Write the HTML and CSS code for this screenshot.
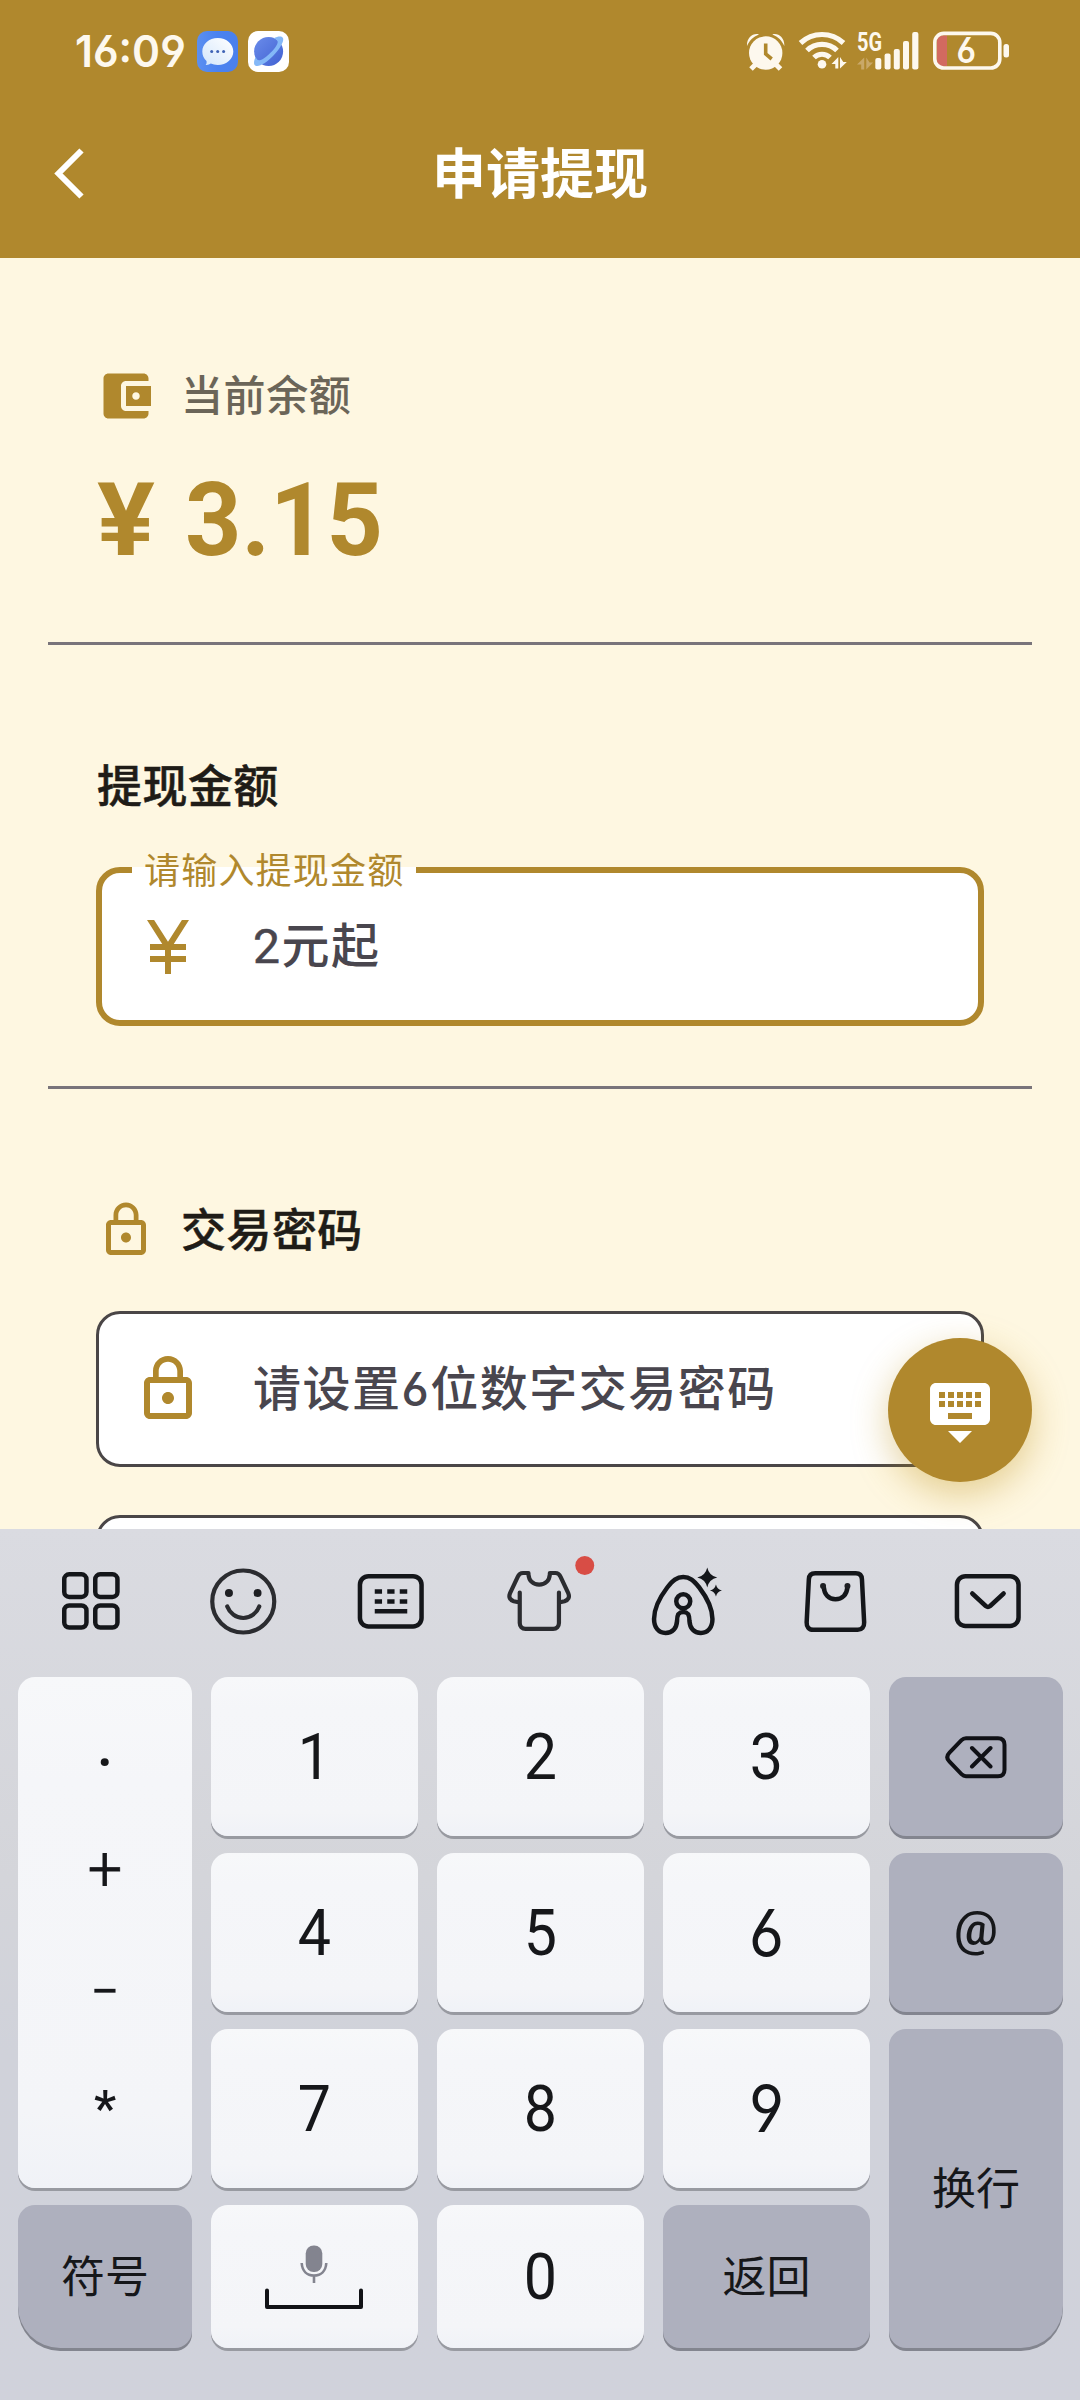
FILE: index.html
```html
<!DOCTYPE html>
<html lang="zh-CN">
<head>
<meta charset="utf-8">
<title>申请提现</title>
<link rel="stylesheet" href="styles.css">
</head>
<body>
<div class="screen">
  <header class="header">
    <div class="status">
      <div class="status-left">
        <span class="clock">16:09</span>
        <svg class="app-icon" viewBox="0 0 41 41">
          <defs>
            <linearGradient id="msg" x1="0" y1="0" x2="1" y2="0"><stop offset="0" stop-color="#5b8ff0"/><stop offset=".5" stop-color="#4a82f0"/><stop offset="1" stop-color="#4a80ec"/></linearGradient>
            <linearGradient id="bub" x1="1" y1="0" x2="0" y2="1"><stop offset="0" stop-color="#ffffff"/><stop offset="1" stop-color="#d3e6fb"/></linearGradient>
          </defs>
          <rect width="41" height="41" rx="10" fill="url(#msg)"/>
          <path d="M20.800 7c8.800 0 15.500 6 15.500 13.500S29.600 34 20.800 34c-2.800 0-5-.5-7-1.400-1.400 1-3.200 1.700-5.200 1.400 1-1.200 1.200-2.600.9-4.100C6.800 27.500 5.300 24.300 5.300 20.500 5.300 13 12 7 20.800 7z" fill="url(#bub)"/>
          <circle cx="14.700" cy="20.500" r="1.500" fill="#3f63b5"/><circle cx="20.700" cy="20.500" r="1.500" fill="#3f63b5"/><circle cx="26.600" cy="20.500" r="1.500" fill="#3f63b5"/>
        </svg>
        <svg class="app-icon" viewBox="0 0 41 41">
          <defs><linearGradient id="pl" x1="0" y1="0" x2="1" y2="1"><stop offset="0" stop-color="#6a8cea"/><stop offset="1" stop-color="#4161d2"/></linearGradient></defs>
          <rect width="41" height="41" rx="10" fill="#fff"/>
          <circle cx="20.600" cy="20.500" r="14.500" fill="url(#pl)"/>
          <path d="M25.500 7.500C30 5.200 33.600 5 34.800 6.800c2 3.200-3 11.200-9.800 18.200-6.800 7-14.500 11.500-17.800 9.400-1.800-1.200-1.400-4.800.6-8.900.3 2.600 1.600 4 3.800 3.800 3-.4 7-3.500 10.800-7.500 4-4 7.400-8.300 7.300-11 0-1.700-2-2.600-4.200-3.300z" fill="#84b8f7"/>
        </svg>
      </div>
      <svg class="status-right" viewBox="744 28 268 46">
        <g fill="#fdf8ee">
          <circle cx="765.700" cy="53" r="16.700"/>
          <path d="M747 46c-.6-8 6-13.500 12-11.600C753 36.500 749.500 40.500 747 46zM784.300 46c.6-8-6-13.500-12-11.600 6 2.100 9.500 6.100 12 11.600z"/>
          <path d="M756 64l-5 5M775.500 64l5 5" stroke="#fdf8ee" stroke-width="5"/>
        </g>
        <path d="M765.700 43.500V54l6 5" fill="none" stroke="#b0882d" stroke-width="3.600"/>
        <g fill="none" stroke="#fdf8ee" stroke-width="5.200">
          <path d="M800.500 43a31.500 31.500 0 0 1 43 0"/>
          <path d="M807 50.500a21.500 21.500 0 0 1 30 0"/>
          <path d="M814 57.500a11.500 11.500 0 0 1 16 0"/>
        </g>
        <circle cx="822" cy="64.200" r="4.300" fill="#fdf8ee"/>
        <path d="M831.500 64l6.800-7v11.500h-3V64zM840 57v11.500l6.800-6.500h-3.500z" fill="#fdf8ee"/>
        <text x="857" y="50.800" class="net" textLength="25" lengthAdjust="spacingAndGlyphs">5G</text>
        <path d="M857 64.500l7.200-7V69.500h-3V64.500zM866.300 57.500v12l6.800-7h-3.500z" fill="#c9a868"/>
        <g fill="#fdf8ee">
          <rect x="875.300" y="58" width="6" height="11.500" rx="2"/>
          <rect x="884.600" y="53.500" width="6" height="16" rx="2"/>
          <rect x="893.800" y="49" width="6" height="20.500" rx="2"/>
          <rect x="903" y="41" width="6" height="28.500" rx="2"/>
          <rect x="912.200" y="32" width="6.200" height="37.500" rx="2"/>
        </g>
        <path d="M947 35.500v30.500h-4c-4 0-6-2-6-6V41.500c0-4 2-6 6-6z" fill="#d26a60"/>
        <rect x="934.800" y="33.400" width="65" height="34.600" rx="9" fill="none" stroke="#fdf8ee" stroke-width="3.600"/>
        <rect x="1003.500" y="44" width="5.500" height="13.500" rx="2.500" fill="#fdf8ee"/>
        <text x="956.500" y="63" class="batt" textLength="19.500" lengthAdjust="spacingAndGlyphs">6</text>
      </svg>
    </div>
    <div class="appbar">
      <svg class="back" viewBox="0 0 60 60"><path d="M40.500 6.500L17.500 29.500L40.500 52.500" fill="none" stroke="#fff" stroke-width="6"/></svg>
      <h1 class="title">申请提现</h1>
      <span class="back"></span>
    </div>
  </header>

  <main class="content">
    <section class="balance">
      <div class="label-row">
        <svg class="icon-60 gold" viewBox="0 0 24 24"><path d="M21 18v1c0 1.100-.9 2-2 2H5c-1.110 0-2-.9-2-2V5c0-1.100.89-2 2-2h14c1.100 0 2 .9 2 2v1h-9c-1.110 0-2 .9-2 2v8c0 1.100.89 2 2 2h9zm-9-2h10V8H12v8zm4-2.500c-.83 0-1.500-.67-1.500-1.500s.67-1.500 1.500-1.500 1.500.67 1.500 1.500-.67 1.500-1.500 1.500z"/></svg>
        <span class="balance-label">当前余额</span>
      </div>
      <div class="amount"><span class="cur">¥</span><span class="num">3.15</span></div>
    </section>
    <hr class="rule">
    <section class="withdraw">
      <h2 class="section-title">提现金额</h2>
      <div class="field field-active">
        <span class="float-label">请输入提现金额</span>
        <svg class="icon-72 gold" viewBox="0 0 24 24"><path d="M13.920 11H18v2h-5v2h5v2h-5v4h-2v-4H6v-2h5v-2H6v-2h4.080L5 3h2.370L12 10.290 16.630 3H19l-5.080 8z"/></svg>
        <span class="hint"><span class="latin">2</span>元起</span>
      </div>
    </section>
    <hr class="rule">
    <section class="password">
      <div class="label-row">
        <svg class="icon-60 gold" viewBox="0 0 24 24"><path id="lock" d="M12 17c1.100 0 2-.9 2-2s-.9-2-2-2-2 .9-2 2 .9 2 2 2zm6-9h-1V6c0-2.760-2.240-5-5-5S7 3.240 7 6v2H6c-1.100 0-2 .9-2 2v10c0 1.100.9 2 2 2h12c1.100 0 2-.9 2-2V10c0-1.100-.9-2-2-2zM8.900 6c0-1.710 1.390-3.100 3.100-3.100s3.100 1.390 3.100 3.100v2H8.900V6zM18 20H6V10h12v10z"/></svg>
        <h2 class="section-title">交易密码</h2>
      </div>
      <div class="field">
        <svg class="icon-72 gold" viewBox="0 0 24 24"><use href="#lock"/></svg>
        <span class="hint">请设置<span class="open-digit">6</span>位数字交易密码</span>
      </div>
      <div class="field"></div>
    </section>
    <button class="fab">
      <svg class="icon-72" viewBox="0 0 24 24" fill="#fff"><path d="M20 3H4c-1.100 0-1.990.9-1.990 2L2 15c0 1.100.9 2 2 2h16c1.100 0 2-.9 2-2V5c0-1.100-.9-2-2-2zm-9 3h2v2h-2V6zm0 3h2v2h-2V9zM8 6h2v2H8V6zm0 3h2v2H8V9zm-1 2H5V9h2v2zm0-3H5V6h2v2zm9 7H8v-2h8v2zm0-4h-2V9h2v2zm0-3h-2V6h2v2zm3 3h-2V9h2v2zm0-3h-2V6h2v2zm-7 15l4-4H8l4 4z"/></svg>
    </button>
  </main>

  <div class="keyboard">
    <div class="tools">
      <svg viewBox="16.250 1529 149.500 148"><rect x="64.500" y="1574.300" width="22.200" height="22.600" rx="5"/><rect x="95.500" y="1574.300" width="22.200" height="22.600" rx="5"/><rect x="64.500" y="1605.400" width="22.200" height="22.200" rx="5"/><rect x="95.500" y="1605.400" width="22.200" height="22.200" rx="5"/></svg>
      <svg class="soft" viewBox="165.750 1529 149.500 148"><circle cx="243" cy="1601.500" r="31"/><circle class="dot" cx="228.700" cy="1593" r="4"/><circle class="dot" cx="257.300" cy="1593" r="4"/><path d="M227 1606.500c2.500 6.500 8.500 11.500 16 11.500s13.500-5 16-11.500"/></svg>
      <svg viewBox="315.250 1529 149.500 148"><rect x="360.200" y="1576.200" width="61.600" height="50.300" rx="8.500"/><path class="flat" d="M375 1591.500h7.300M387.500 1591.500h7.300M400 1591.500h7.500M375 1601.500h7.300M387.500 1601.500h7.300M400 1601.500h7.500M375 1611.300h32.500"/></svg>
      <svg class="soft" viewBox="464.750 1529 149.500 148"><path d="M519.500 1592.500V1623c0 3.500 2.300 5.800 5.800 5.800h27.600c3.500 0 5.800-2.300 5.800-5.800v-30.500M519.500 1602.500l-6-1.300c-3.800-1.200-5.300-4-3.800-7.800l8-17c1-2.400 2.600-3.400 5-3.400h5.500v1.500c.5 6 4.500 10.200 10.700 10.200s10.200-4.200 10.700-10.200V1573h5.500c2.400 0 4 1 5 3.400l8 17c1.500 3.800 0 6.600-3.800 7.800l-5.600 1.300"/><circle class="badge" cx="584.500" cy="1565.500" r="9.500"/></svg>
      <svg viewBox="614.250 1529 149.500 148"><path d="M683.500 1577c6.500 0 10.500 3.500 16 10.500 8 10.500 13.200 22 13.200 31.500 0 8.500-4.500 14-11.500 14-7 0-11-4.500-11.500-12 0-5.800-1-9-6.200-9s-6.200 3.200-6.200 9c-.5 7.500-4.500 12-11.500 12s-11.500-5.500-11.500-14c0-9.500 5.200-21 13.200-31.500 5.500-7 9.500-10.500 16-10.500z"/><circle cx="683.500" cy="1601.300" r="7"/><path class="fill" d="M707.500 1567.500q1.800 8.300 10 10-8.200 1.700-10 10-1.800-8.300-10-10 8.200-1.700 10-10zM716.200 1584.500q1.200 4.900 6 6-4.800 1.100-6 6-1.200-4.900-6-6 4.800-1.100 6-6z"/></svg>
      <svg viewBox="763.750 1529 149.500 148"><path d="M815 1573.300h40.500c4 0 6 2 6.200 6l2.200 43c.2 4.500-2.200 7.500-6.500 7.500h-44.500c-4.300 0-6.700-3-6.500-7.500l2.200-43c.2-4 2.400-6 6.400-6zM823.500 1587c.5 7.500 5 12.300 11.700 12.300s11.500-4.800 12-12.300"/><circle class="dot" cx="822.800" cy="1586" r="3"/><circle class="dot" cx="847.200" cy="1586" r="3"/></svg>
      <svg viewBox="913.250 1529 149.500 148"><rect x="957.200" y="1576.200" width="61.600" height="49.800" rx="8.500"/><path d="M972.500 1593.500l13.500 12.500q2.200 1.800 4.400 0l13.500-12.500"/></svg>
    </div>
    <div class="keys">
      <div class="key symbols"><span class="s-dot">·</span><span class="s-plus">+</span><span class="s-minus">−</span><span class="s-star">*</span></div>
      <div class="key"><span class="digit">1</span></div>
      <div class="key"><span class="digit">2</span></div>
      <div class="key"><span class="digit">3</span></div>
      <div class="key dark"><svg class="bksp" viewBox="944 1735 64 46"><path d="M966 1739.200h32c4.500 0 6.500 2 6.500 6.500v25c0 4.500-2 6.500-6.500 6.500h-32c-2 0-3-.5-4.500-2l-12-12.500c-3-3-3-6 0-9l12-12.500c1.500-1.500 2.500-2 4.500-2zM972 1749l18.500 18.500M990.500 1749l-18.500 18.500"/></svg></div>
      <div class="key"><span class="digit">4</span></div>
      <div class="key"><span class="digit">5</span></div>
      <div class="key"><span class="open">6</span></div>
      <div class="key dark at">@</div>
      <div class="key"><span class="digit">7</span></div>
      <div class="key"><span class="digit">8</span></div>
      <div class="key"><span class="open">9</span></div>
      <div class="key dark word enter">换行</div>
      <div class="key dark word sym">符号</div>
      <div class="key"><svg class="space" viewBox="263 2242 104 72"><rect x="305.700" y="2246.400" width="16.600" height="26.600" rx="8" fill="#83848f"/><path d="M301.700 2264c.5 8 5.300 12.500 12.300 12.500s11.800-4.500 12.300-12.500M314 2276.500v7.500" fill="none" stroke="#83848f" stroke-width="2.600"/><path d="M267 2291.500v16.500h94v-16.500" fill="none" stroke="#111216" stroke-width="4" stroke-linecap="round" stroke-linejoin="round"/></svg></div>
      <div class="key"><span class="digit">0</span></div>
      <div class="key dark word">返回</div>
    </div>
  </div>
</div>
</body>
</html>
```
FILE: styles.css
```css
* { box-sizing: border-box; margin: 0; padding: 0; }
body { font-family: Roboto, "Noto Sans CJK SC", sans-serif; }
svg { display: block; flex: none; }

.screen { width: 1080px; height: 2400px; display: flex; flex-direction: column; overflow: hidden; background: #fef7e1; }

.header { height: 258px; flex: none; background: #b0882d; }
.status { height: 96px; padding: 28px 68px 0 75px; display: flex; justify-content: space-between; }
.status-left { display: flex; padding-top: 3px; height: 45px; }
.clock { width: 122px; font: 600 44px/41px Inter, sans-serif; font-feature-settings: "cv03", "cv04"; color: #fdf8ee; white-space: nowrap; transform: scaleX(.965); transform-origin: 0 0; }
.app-icon { width: 41px; height: 41px; margin-right: 10px; }
.status-right { width: 268px; height: 46px; }
.net { font: 700 26px Roboto, sans-serif; fill: #fdf8ee; }
.batt { font: 600 35px Inter, sans-serif; font-feature-settings: "cv03"; fill: #fdf8ee; }
.appbar { height: 156px; padding: 0 39px 0 41px; display: flex; align-items: center; justify-content: space-between; }
.back { width: 60px; height: 60px; }
.title { font-size: 54px; font-weight: 700; line-height: 60px; padding-top: 4px; margin-left: -2px; color: #fff; }

.content { position: relative; height: 1271px; flex: none; padding: 108px 48px 0; overflow: hidden; }
.icon-60 { width: 60px; height: 60px; }
.icon-72 { width: 72px; height: 72px; }
.gold { fill: #b0882d; }
.balance, .withdraw, .password { padding: 0 48px; }
.balance { height: 276px; }
.label-row { height: 60px; display: flex; align-items: center; gap: 24px; }
.balance-label { font-size: 42px; font-weight: 500; line-height: 60px; letter-spacing: .6px; padding: 1px 0 0 1px; color: #6b6558; }
.amount { margin-top: 44px; padding-left: 1px; display: flex; gap: 33px; font-size: 102px; font-weight: 700; line-height: 100px; color: #b0882d; }
.cur { transform: scaleX(1.06); transform-origin: 0 0; }
.num { transform: scaleX(.965); transform-origin: 0 0; }
.rule { height: 3px; border: 0; background: #79747a; }
.withdraw { padding-top: 111px; height: 441px; }
.section-title { font-size: 45px; font-weight: 500; line-height: 60px; height: 60px; padding: 2px 0 0 1px; letter-spacing: .45px; color: #1f1c17; -webkit-text-stroke: .5px #1f1c17; }
.field { position: relative; height: 156px; border: 3px solid #4a4647; border-radius: 24px; background: #fff; display: flex; align-items: center; padding-left: 33px; gap: 49px; }
.hint { font-size: 48px; font-weight: 500; line-height: 72px; letter-spacing: 1.5px; color: #49464e; }
.latin { display: inline-block; font-weight: 400; -webkit-text-stroke: .5px #49464e; }
.open-digit { font: 500 46px/72px Inter, sans-serif; font-feature-settings: "cv03"; }
.field-active { height: 159px; border: 6px solid #b0882d; margin-top: 51px; padding-left: 30px; }
.float-label { position: absolute; left: 30px; top: -24px; padding: 2px 12px 0; font-size: 36px; line-height: 42px; letter-spacing: 1.2px; color: #b0882d; background: linear-gradient(#fef7e1 18px, #fff 18px); }
.password { padding-top: 111px; }
.password .field { margin-top: 51px; }
.password .field + .field { margin-top: 48px; }
.fab { position: absolute; left: 888px; top: 1080px; width: 144px; height: 144px; border: 0; border-radius: 50%; background: #b0882d; display: grid; place-items: center; box-shadow: 0 12px 36px rgba(190, 145, 25, .4); }

.keyboard { height: 871px; flex: none; background: linear-gradient(#dadbe1, #d4d5da 40%, #d0d2da 60%, #d0d2db); }
.tools { height: 148px; padding: 0 16.25px; display: grid; grid-template-columns: repeat(7, 149.5px); fill: none; stroke: #14161a; stroke-width: 4.5px; stroke-linecap: round; stroke-linejoin: round; }
.tools svg { width: 149.5px; height: 148px; }
.tools .soft { stroke: #2b2c30; stroke-width: 4.2px; }
.tools .dot { fill: #1e1f23; stroke: none; }
.tools .fill { fill: #14161a; stroke: none; }
.tools .flat { stroke-linecap: butt; }
.tools .badge { fill: #d84d45; stroke: none; }
.keys { padding: 0 17px 0 18px; display: grid; grid-template-columns: 174px 207px 207px 207px 174px; grid-template-rows: 159px 159px 159px 143px; gap: 17px 19px; }
.key { border-radius: 17px; background: linear-gradient(#f7f8fa, #f5f6f9 20%, #f4f5f8 85%, #f0f2f7); box-shadow: 0 3px 0 #989aa1; display: flex; align-items: center; justify-content: center; font-size: 65px; line-height: 80px; color: #16171a; }
.digit { transform: scaleX(.91); }
.open { font-family: Inter, sans-serif; font-size: 64px; font-feature-settings: "cv03", "cv04"; transform: scaleX(.94); }
.dark { background: #aeb0be; box-shadow: 0 3px 0 #83858f; }
.symbols { grid-row: span 3; flex-direction: column; justify-content: flex-start; padding-top: 34px; font-size: 52px; }
.symbols span { height: 113px; line-height: 113px; }
.symbols .s-dot { font-size: 72px; line-height: 106px; height: 102px; }
.symbols .s-plus { font-size: 61px; font-weight: 300; height: 122px; -webkit-text-stroke: .8px #16171a; }
.symbols .s-minus { height: 118px; }
.symbols .s-star { font-weight: 500; font-size: 50px; }
.word { font-size: 44px; line-height: 60px; padding-top: 3px; }
.at { font-size: 49px; font-weight: 500; padding-bottom: 8px; }
.enter { grid-row: span 2; border-bottom-right-radius: 42px; }
.sym { border-bottom-left-radius: 42px; }
.bksp { width: 64px; height: 46px; fill: none; stroke: #101116; stroke-width: 4px; stroke-linecap: round; stroke-linejoin: round; }
.space { width: 104px; height: 72px; }
```
